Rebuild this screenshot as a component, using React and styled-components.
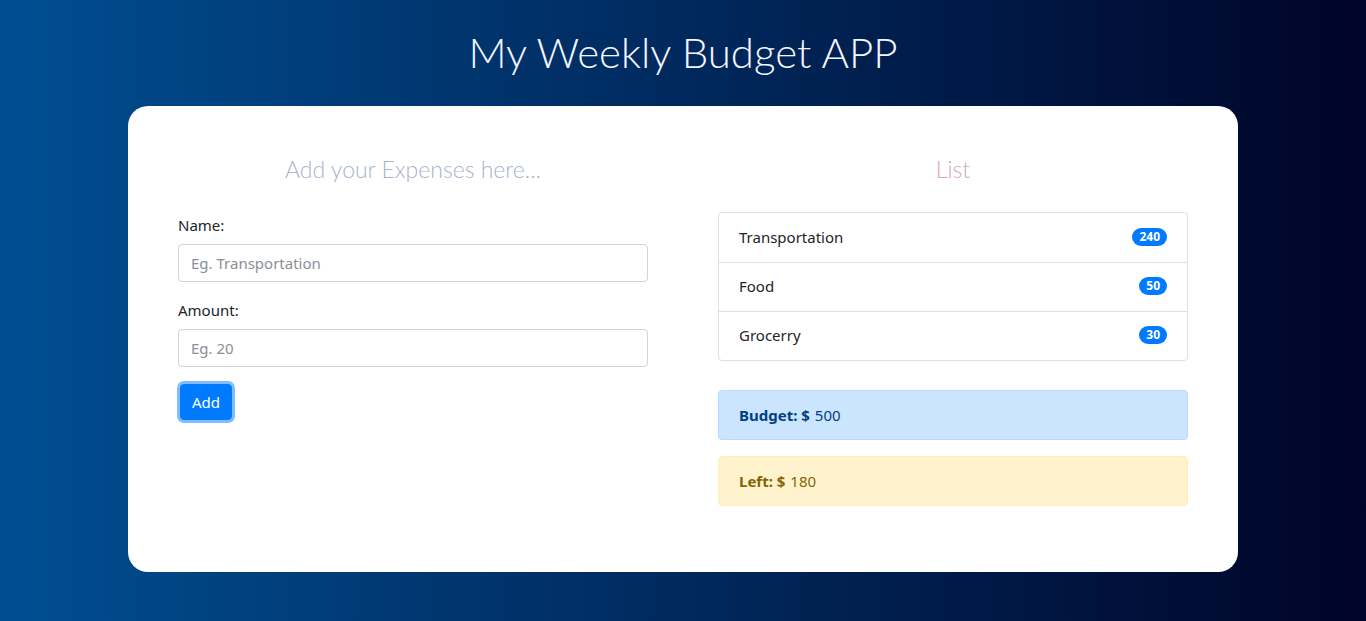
import React, { useState } from "react";
import styled, { createGlobalStyle } from "styled-components";

const GlobalStyle = createGlobalStyle`
  html, body {
    margin: 0;
    padding: 0;
  }
  body {
    font-family: "Noto Sans", "Open Sans", sans-serif;
    font-size: 15px;
    color: #212529;
  }
  * {
    box-sizing: border-box;
  }
`;

const Page = styled.div`
  min-height: 621px;
  background: linear-gradient(to right, #004e92, #000428);
  padding: 25px 128px 49px;
`;

const Title = styled.h1`
  margin: 0 0 27px;
  text-align: center;
  font-family: "Lato", sans-serif;
  font-weight: 300;
  font-size: 42px;
  line-height: 54px;
  color: #f4f6ff;
`;

const Card = styled.div`
  background: #fff;
  border-radius: 20px;
  padding: 50px 50px 66px;
  display: grid;
  grid-template-columns: 470px 470px;
  column-gap: 70px;
`;

const Column = styled.div`
  display: flex;
  flex-direction: column;
`;

const SectionTitle = styled.h3`
  margin: 0 0 30px;
  text-align: center;
  font-family: "Lato", sans-serif;
  font-weight: 300;
  font-size: 23px;
  line-height: 26px;
  color: ${(p) => p.$color || "#a9b3cc"};
`;

const Label = styled.label`
  display: block;
  font-size: 15px;
  line-height: 24px;
  margin-bottom: 7px;
  margin-top: ${(p) => (p.$first ? "1px" : "0")};
`;

const Input = styled.input`
  display: block;
  width: 100%;
  height: 38px;
  padding: 6px 12px;
  font-family: inherit;
  font-size: 15px;
  color: #495057;
  border: 1px solid #ced4da;
  border-radius: 4px;
  margin-bottom: ${(p) => p.$mb || "16px"};
  &::placeholder {
    color: #8a9097;
  }
  &:focus {
    outline: none;
    border-color: #80bdff;
  }
`;

const Button = styled.button`
  align-self: flex-start;
  margin-left: 2px;
  height: 36px;
  padding: 0 11px;
  font-family: inherit;
  font-size: 15px;
  color: #fff;
  background: #007bff;
  border: 1px solid #007bff;
  border-radius: 4px;
  box-shadow: 0 0 0 3px rgba(0, 123, 255, 0.5);
  cursor: pointer;
`;

const ListGroup = styled.ul`
  list-style: none;
  margin: 0 0 29px;
  padding: 0;
  border: 1px solid rgba(0, 0, 0, 0.125);
  border-radius: 4px;
`;

const ListItem = styled.li`
  display: flex;
  align-items: center;
  justify-content: space-between;
  height: 49px;
  padding: 0 20px 1px;
  font-size: 15px;
  & + & {
    border-top: 1px solid rgba(0, 0, 0, 0.125);
    padding-bottom: 2px;
  }
`;

const Badge = styled.span`
  background: #007bff;
  color: #fff;
  font-weight: 700;
  font-size: 12px;
  line-height: 18px;
  padding: 0 7px;
  border-radius: 10px;
`;

const Alert = styled.div`
  height: 50px;
  display: flex;
  align-items: center;
  padding: 0 20px 1px;
  border-radius: 4px;
  font-size: 15px;
  background: ${(p) => (p.$kind === "warning" ? "#fff3cd" : "#cce5ff")};
  border: 1px solid ${(p) => (p.$kind === "warning" ? "#ffeeba" : "#b8daff")};
  color: ${(p) => (p.$kind === "warning" ? "#856404" : "#004085")};
  & + & {
    margin-top: 16px;
  }
  b {
    margin-right: 5px;
  }
`;

const expenses = [
  { name: "Transportation", amount: 240 },
  { name: "Food", amount: 50 },
  { name: "Grocerry", amount: 30 },
];

function App() {
  const [name, setName] = useState("");
  const [amount, setAmount] = useState("");
  const budget = 500;
  const left = budget - expenses.reduce((s, e) => s + e.amount, 0);

  return (
    <Page>
      <GlobalStyle />
      <Title>My Weekly Budget APP</Title>
      <Card>
        <Column>
          <SectionTitle>Add your Expenses here...</SectionTitle>
          <Label $first>Name:</Label>
          <Input
            type="text"
            placeholder="Eg. Transportation"
            value={name}
            onChange={(e) => setName(e.target.value)}
          />
          <Label>Amount:</Label>
          <Input
            type="number"
            placeholder="Eg. 20"
            $mb="17px"
            value={amount}
            onChange={(e) => setAmount(e.target.value)}
          />
          <Button>Add</Button>
        </Column>
        <Column>
          <SectionTitle $color="#d7a6bd">List</SectionTitle>
          <ListGroup>
            {expenses.map((item) => (
              <ListItem key={item.name}>
                {item.name}
                <Badge>{item.amount}</Badge>
              </ListItem>
            ))}
          </ListGroup>
          <Alert>
            <b>Budget: $</b> {budget}
          </Alert>
          <Alert $kind="warning">
            <b>Left: $</b> {left}
          </Alert>
        </Column>
      </Card>
    </Page>
  );
}

export default App;
